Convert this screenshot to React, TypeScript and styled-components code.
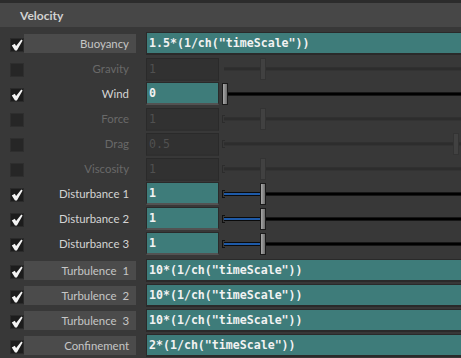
import React from "react";
import styled, { createGlobalStyle } from "styled-components";

const GlobalStyle = createGlobalStyle`
  html, body {
    margin: 0;
    padding: 0;
    background: #383838;
  }
`;

type SliderState = "none" | "active" | "disabled";

interface Param {
  label: string;
  checked: boolean;
  value: string;
  expr?: boolean;
  boxed?: boolean;
  disabled?: boolean;
  slider?: SliderState;
  pos?: number; // handle x within slider area
  fill?: boolean;
  bracket?: boolean;
  gapBefore?: boolean;
}

const params: Param[] = [
  { label: "Buoyancy", checked: true, value: '1.5*(1/ch("timeScale"))', expr: true, boxed: true },
  { label: "Gravity", checked: false, value: "1", disabled: true, slider: "disabled", pos: 38 },
  { label: "Wind", checked: true, value: "0", slider: "active", pos: 0 },
  { label: "Force", checked: false, value: "1", disabled: true, slider: "disabled", pos: 38, bracket: true },
  { label: "Drag", checked: false, value: "0.5", disabled: true, slider: "disabled", pos: 231, bracket: true },
  { label: "Viscosity", checked: false, value: "1", disabled: true, slider: "disabled", pos: 38, bracket: true },
  { label: "Disturbance 1", checked: true, value: "1", slider: "active", pos: 38, fill: true, bracket: true },
  { label: "Disturbance 2", checked: true, value: "1", slider: "active", pos: 38, fill: true, bracket: true },
  { label: "Disturbance 3", checked: true, value: "1", slider: "active", pos: 38, fill: true, bracket: true },
  { label: "Turbulence  1", checked: true, value: '10*(1/ch("timeScale"))', expr: true, boxed: true, gapBefore: true },
  { label: "Turbulence  2", checked: true, value: '10*(1/ch("timeScale"))', expr: true, boxed: true },
  { label: "Turbulence  3", checked: true, value: '10*(1/ch("timeScale"))', expr: true, boxed: true },
  { label: "Confinement", checked: true, value: '2*(1/ch("timeScale"))', expr: true, boxed: true },
];

const Panel = styled.div`
  width: 461px;
  height: 358px;
  overflow: hidden;
  background: #383838;
  border-top: 3px solid #2c2c2c;
  box-sizing: border-box;
  font-family: Lato, "Liberation Sans", sans-serif;
`;

const Header = styled.div`
  height: 24px;
  background: #474747;
  display: flex;
  align-items: center;
  padding-left: 20px;
  font-weight: 700;
  font-size: 12px;
  color: #d2d2d2;
`;

const Rows = styled.div`
  display: flex;
  flex-direction: column;
  padding-top: 4px;
`;

const Row = styled.div<{ $gap?: boolean }>`
  height: 25px;
  display: flex;
  align-items: center;
  padding-left: 10px;
  margin-top: ${({ $gap }) => ($gap ? "2px" : "0")};
`;

const Check = styled.div<{ $on: boolean }>`
  width: 12px;
  height: 12px;
  border: 1px solid ${({ $on }) => ($on ? "#2a2a2a" : "#2e2e2e")};
  background: ${({ $on }) => ($on ? "#1c1c1c" : "#262626")};
  display: flex;
  align-items: center;
  justify-content: center;
  margin-top: 2px;
  flex: none;
`;

const Label = styled.div<{ $boxed?: boolean; $disabled?: boolean }>`
  width: 112px;
  height: 19px;
  box-sizing: border-box;
  padding-right: 7px;
  display: flex;
  align-items: center;
  justify-content: flex-end;
  background: ${({ $boxed }) => ($boxed ? "#4b4b4b" : "transparent")};
  color: ${({ $disabled, $boxed }) => ($disabled ? "#696969" : $boxed ? "#c6c6c6" : "#d4d4d4")};
  font-size: 11.4px;
  white-space: pre;
  flex: none;
`;

const Field = styled.div<{ $expr?: boolean; $disabled?: boolean }>`
  margin-left: 10px;
  width: ${({ $expr }) => ($expr ? "330px" : "73px")};
  height: 23px;
  box-sizing: border-box;
  flex: none;
  border: 1px solid #2a2a2a;
  border-bottom: 2px solid ${({ $disabled, $expr }) => ($disabled ? "#2f2f2f" : $expr ? "#2a2a2a" : "#525252")};
  background: ${({ $disabled }) => ($disabled ? "#313131" : "#3e7c7a")};
  color: ${({ $disabled }) => ($disabled ? "#505050" : "#f2f2f2")};
  font-family: "DejaVu Sans Mono", "Liberation Mono", monospace;
  font-weight: ${({ $disabled }) => ($disabled ? 400 : 700)};
  font-size: 11.6px;
  display: flex;
  align-items: center;
  padding-left: 2px;
  margin-top: ${({ $disabled }) => ($disabled ? "1px" : "0")};
`;

const SliderArea = styled.div`
  position: relative;
  flex: 1;
  height: 22px;
  margin-left: 3px;
`;

const Track = styled.div<{ $state: SliderState }>`
  position: absolute;
  left: 2px;
  right: 0;
  top: 9px;
  height: 2px;
  background: ${({ $state }) => ($state === "active" ? "#000" : "#2d2d2d")};
  border-top: 1px solid ${({ $state }) => ($state === "active" ? "#161616" : "#303030")};
  border-bottom: 1px solid ${({ $state }) => ($state === "active" ? "#161616" : "#333333")};
`;

const Fill = styled.div`
  position: absolute;
  left: 2px;
  top: 9px;
  height: 2px;
  background: #1e5aa8;
  border-top: 1px solid #0a0a0a;
  border-bottom: 1px solid #0a0a0a;
`;

const Bracket = styled.div<{ $dim?: boolean }>`
  position: absolute;
  left: 0;
  top: 7px;
  width: 2px;
  height: 6px;
  border: 1px solid ${({ $dim }) => ($dim ? "#2c2c2c" : "#111")};
  border-right: none;
`;

const Handle = styled.div<{ $dim?: boolean }>`
  position: absolute;
  top: 0;
  width: 4px;
  height: 20px;
  border: 1px solid ${({ $dim }) => ($dim ? "#333333" : "#1a1a1a")};
  background: ${({ $dim }) =>
    $dim ? "#414141" : "linear-gradient(90deg, #a8a8a8 0%, #8a8a8a 50%, #6e6e6e 100%)"};
`;

const CheckMark = () => (
  <svg width="12" height="12" viewBox="0 0 12 12">
    <path d="M0.8 6.4 L3.8 4.8 L5.1 7 L10.3 0.6 L11.6 1.6 L5.9 11.4 L4 11.4 Z" fill="#f4f4f4" />
  </svg>
);

const Slider = ({ p }: { p: Param }) => {
  const state = p.slider ?? "none";
  if (state === "none") return null;
  const dim = state === "disabled";
  const pos = p.pos ?? 0;
  return (
    <SliderArea>
      {p.bracket && <Bracket $dim={dim} />}
      <Track $state={state} />
      {p.fill && <Fill style={{ width: pos - 2 }} />}
      <Handle $dim={dim} style={{ left: pos }} />
    </SliderArea>
  );
};

export default function App() {
  return (
    <>
      <GlobalStyle />
      <Panel>
        <Header>Velocity</Header>
        <Rows>
          {params.map((p) => (
            <Row key={p.label} $gap={p.gapBefore}>
              <Check $on={p.checked}>{p.checked && <CheckMark />}</Check>
              <Label $boxed={p.boxed} $disabled={p.disabled}>
                {p.label}
              </Label>
              <Field $expr={p.expr} $disabled={p.disabled}>
                {p.value}
              </Field>
              <Slider p={p} />
            </Row>
          ))}
        </Rows>
      </Panel>
    </>
  );
}
